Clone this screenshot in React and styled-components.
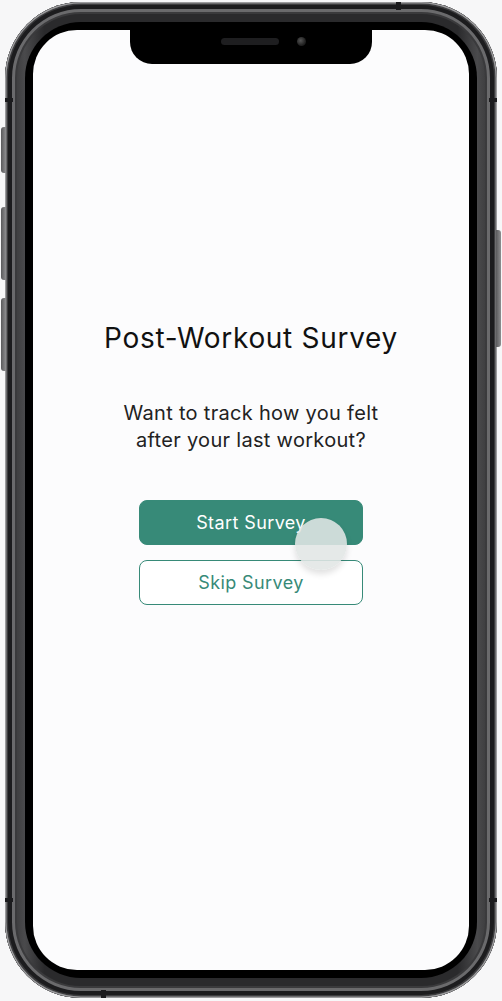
import React from "react";
import styled, { createGlobalStyle } from "styled-components";

const Global = createGlobalStyle`
  html, body {
    margin: 0;
    padding: 0;
    background: #f7f7f8;
  }
  body {
    font-family: Inter, "Noto Sans", Roboto, sans-serif;
  }
`;

const Page = styled.div`
  width: 502px;
  height: 1001px;
  display: flex;
  justify-content: center;
  padding-top: 2px;
  box-sizing: border-box;
`;

const Frame = styled.div`
  position: relative;
  width: 492px;
  height: 996px;
  box-sizing: border-box;
  border-radius: 76px;
  padding: 20px;
  background: linear-gradient(90deg, #2e2e30 0%, #4a4a4c 4%, #2a2a2c 8%, #2a2a2c 92%, #4a4a4c 96%, #2e2e30 100%);
  box-shadow:
    inset 0 0 0 1.5px #9c9c9e,
    inset 0 0 0 3px #3c3c3e,
    inset 0 0 0 7px #1c1c1e,
    inset 0 0 0 10px #6a6a6c,
    inset 0 0 0 12px #3a3a3c;
`;

const SideButton = styled.div`
  position: absolute;
  top: ${(p) => p.$top}px;
  height: ${(p) => p.$h}px;
  width: 5px;
  background: linear-gradient(90deg, #5a5a5c, #8e8e90);
  ${(p) => (p.$right ? "right: -4px; border-radius: 0 3px 3px 0;" : "left: -4px; border-radius: 3px 0 0 3px;")}
`;

const Antenna = styled.div`
  position: absolute;
  background: #1c1c1e;
  ${(p) => p.$pos}
`;

const Bezel = styled.div`
  height: 100%;
  box-sizing: border-box;
  border-radius: 56px;
  background: #000;
  padding: 8px;
`;

const Screen = styled.div`
  position: relative;
  height: 100%;
  border-radius: 44px;
  background: #fcfcfd;
  overflow: hidden;
  display: flex;
  flex-direction: column;
  align-items: center;
  padding-top: 291px;
  box-sizing: border-box;
`;

const Notch = styled.div`
  position: absolute;
  top: 0;
  left: 50%;
  transform: translateX(-50%);
  width: 242px;
  height: 34px;
  background: #000;
  border-radius: 0 0 22px 22px;
  display: flex;
  justify-content: center;
  align-items: center;
  gap: 18px;
  padding-left: 24px;
  box-sizing: border-box;
  padding-bottom: 12px;
`;

const Speaker = styled.div`
  width: 58px;
  height: 7px;
  border-radius: 4px;
  background: #1e1e20;
`;

const Camera = styled.div`
  width: 9px;
  height: 9px;
  border-radius: 50%;
  background: radial-gradient(circle at 40% 40%, #555 0%, #222 60%, #111 100%);
`;

const Title = styled.h1`
  margin: 0;
  font-size: 28px;
  line-height: 34px;
  font-weight: 400;
  color: #111;
  letter-spacing: 0.7px;
`;

const Subtitle = styled.p`
  margin: 45px 0 0;
  font-size: 20px;
  line-height: 27px;
  color: #222;
  text-align: center;
  letter-spacing: 0.3px;
`;

const Actions = styled.div`
  position: relative;
  margin-top: 46px;
  display: flex;
  flex-direction: column;
  gap: 15px;
`;

const Button = styled.button`
  width: 224px;
  height: 45px;
  border-radius: 8px;
  font-family: inherit;
  font-size: 18px;
  letter-spacing: 0.4px;
  cursor: pointer;
  border: 1.5px solid #378a78;
  background: ${(p) => (p.$primary ? "#378a78" : "#fff")};
  color: ${(p) => (p.$primary ? "#fff" : "#378a78")};
`;

const Touch = styled.div`
  position: absolute;
  left: 156px;
  top: 18px;
  width: 52px;
  height: 52px;
  border-radius: 50%;
  background: rgba(225, 230, 229, 0.88);
  box-shadow: 0 4px 6px rgba(0, 0, 0, 0.12);
`;

export default function App() {
  return (
    <Page>
      <Global />
      <Frame>
        <SideButton $top={125} $h={46} />
        <SideButton $top={205} $h={73} />
        <SideButton $top={296} $h={73} />
        <SideButton $right $top={228} $h={117} />
        <Antenna $pos="top: 0; right: 96px; width: 5px; height: 8px;" />
        <Antenna $pos="top: 96px; left: 0; width: 8px; height: 4px;" />
        <Antenna $pos="top: 96px; right: 0; width: 8px; height: 4px;" />
        <Antenna $pos="bottom: 0; left: 96px; width: 5px; height: 8px;" />
        <Antenna $pos="bottom: 96px; left: 0; width: 8px; height: 4px;" />
        <Antenna $pos="bottom: 96px; right: 0; width: 8px; height: 4px;" />
        <Bezel>
          <Screen>
            <Notch>
              <Speaker />
              <Camera />
            </Notch>
            <Title>Post-Workout Survey</Title>
            <Subtitle>
              Want to track how you felt
              <br />
              after your last workout?
            </Subtitle>
            <Actions>
              <Button $primary>Start Survey</Button>
              <Button>Skip Survey</Button>
              <Touch />
            </Actions>
          </Screen>
        </Bezel>
      </Frame>
    </Page>
  );
}
